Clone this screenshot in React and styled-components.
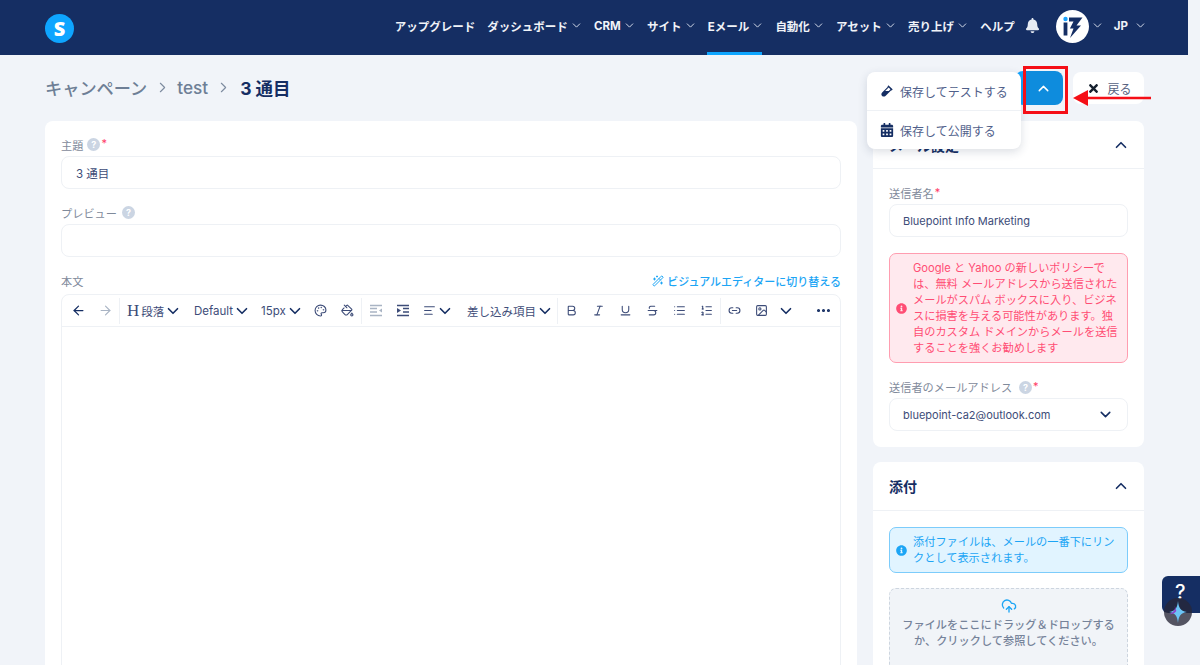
import React from 'react';
import styled, { createGlobalStyle } from 'styled-components';
import {
  ArrowLeft, ArrowRight, ChevronDown, ChevronUp, Palette, Bold, Italic, Underline, Strikethrough,
  List, ListOrdered, Link2, Image as ImageIcon, MoreHorizontal, WandSparkles, CloudUpload, AlignLeft,
  ChevronRight, PaintBucket,
} from 'lucide-react';
import { FaBell, FaCalendarAlt, FaVial, FaTimes, FaInfoCircle } from 'react-icons/fa';

const CJK = `Inter, "Noto Sans CJK JP", sans-serif`;
const NAVY = '#152e63';
const TEXT = '#3d4c78';

const Global = createGlobalStyle`
  html, body { margin: 0; height: 665px; overflow: hidden; background: #f1f4f9; }
  body { font-family: ${CJK}; }
  * { box-sizing: border-box; }
`;

const Shell = styled.div`width: 1188px; height: 665px; overflow: hidden;`;

const Header = styled.header`
  height: 55px; background: ${NAVY}; display: flex; align-items: center; justify-content: space-between;
  padding: 0 42px 0 45px;
`;
const Logo = styled.div`
  width: 29px; height: 29px; border-radius: 50%; background: #0ea5ff; color: #fff; font: 800 20px/29px "Open Sans", sans-serif;
  text-align: center; margin-top: 1px;
`;
const Nav = styled.nav`display: flex; align-items: center; height: 55px;`;
const NavItem = styled.div`
  position: relative; display: flex; align-items: center; height: 55px;
  padding: 0 ${p => p.$pr ?? 6.1}px 4px ${p => p.$pl ?? 6.1}px;
  color: #f0f3f8; font-size: 11.5px; font-weight: 700; white-space: nowrap; gap: ${p => p.$gap ?? 3}px;
  svg { color: #d5dcea; margin: 0 -1px; }
  ${p => p.$active && `&::after { content: ''; position: absolute; left: 5px; right: 7px; bottom: 0; height: 3px; background: #0ea5ff; }`}
`;
const BellWrap = styled.div`display: flex; padding: 0 12px 4px 4px; color: #e6ebf3; font-size: 15px;`;
const Avatar = styled.div`width: 33px; height: 33px; margin-left: 4px; margin-right: -1px; margin-bottom: 3px;`;

const Main = styled.main`padding: 0 44px 0 45px;`;
const TitleRow = styled.div`height: 66px; display: flex; align-items: center; justify-content: space-between;`;
const Crumbs = styled.div`display: flex; align-items: center; color: #6e7f96; font-size: 17.2px; font-weight: 500; padding-bottom: 2px;`;
const CrumbSep = styled.span`display: flex; margin: 0 6px 0 7px; color: #7d8ba0;`;
const CrumbNow = styled.span`color: ${NAVY}; font-size: 17.5px; font-weight: 700; margin-left: 2px;`;

const Actions = styled.div`position: relative; display: flex; align-items: center; gap: 10px;`;
const Split = styled.div`display: flex; height: 34px;`;
const SaveMain = styled.div`width: 8px; background: #12a4ff; border-radius: 8px 0 0 8px;`;
const SaveCaret = styled.div`
  width: 40px; background: #0e8cdd; border-radius: 0 8px 8px 0; color: #fff; display: flex; align-items: center; justify-content: center;
  border-left: 1px solid #2a9be2;
`;
const BackBtn = styled.div`
  width: 71px; height: 32px; background: #fff; border-radius: 8px; display: flex; align-items: center; justify-content: center;
  gap: 7px; font-size: 12px; color: #55617e; padding-left: 2px; svg { color: #15202e; }
`;
const Menu = styled.div`
  position: absolute; left: -148px; top: 1px; width: 154px; height: 77px; background: #fff; border-radius: 8px;
  box-shadow: 0 3px 10px rgba(40, 55, 90, .16); z-index: 3;
`;
const MenuRow = styled.div`
  height: ${p => p.$h}px; display: flex; align-items: center; gap: 6px; padding-left: 13px; color: #50608a; font-size: 12px;
  & + & { border-top: 1px solid #eef1f5; }
  svg { color: ${NAVY}; flex: none; width: 14px; }
`;
const RedBox = styled.div`
  position: absolute; left: 8px; top: -5px; width: 45px; height: 48px; border: 3px solid #f50f17; z-index: 4;
`;
const RedArrow = styled.svg`position: absolute; left: 58px; top: 17px; z-index: 4;`;

const Columns = styled.div`display: grid; grid-template-columns: 812px 271px; gap: 16px; align-items: start;`;
const Card = styled.section`background: #fff; border-radius: 8px; margin-bottom: ${p => p.$mb || 0}px;`;
const FormCard = styled(Card)`padding: 12px 16px 0; height: 700px;`;
const Label = styled.div`
  display: flex; align-items: center; height: ${p => p.$h || 23}px; color: #7f8a9b; font-size: 11.2px; gap: 4px;
  justify-content: ${p => p.$between ? 'space-between' : 'flex-start'};
`;
const Help = styled.span`
  width: 13px; height: 13px; border-radius: 50%; background: #cbd5e3; color: #fff; font-size: 9px; font-weight: 700;
  display: inline-flex; align-items: center; justify-content: center; margin-left: ${p => p.$ml || 0}px;
`;
const Req = styled.span`color: #ff3b66; font-size: 11px; margin-left: -3px; margin-top: -3px;`;
const Input = styled.div`
  height: 33px; border: 1px solid #eef1f5; border-radius: 8px; padding: 0 ${p => p.$pad || 13}px; display: flex; align-items: center;
  justify-content: space-between; color: ${TEXT}; font-size: ${p => p.$fs || 11}px; margin-bottom: ${p => p.$mb ?? 12}px;
  svg { color: ${NAVY}; }
`;
const SwitchLink = styled.span`display: flex; align-items: center; gap: 3px; color: #1ca5f5; font-size: 11px; font-weight: 500;`;
const Editor = styled.div`margin-top: 2px; border: 1px solid #eef1f5; border-radius: 8px 8px 0 0; height: 500px;`;
const Toolbar = styled.div`
  height: 32px; display: flex; align-items: center; padding-left: 3px; border-bottom: 1px solid #eef1f5; color: ${TEXT}; position: relative;
`;
const Tool = styled.span`
  width: ${p => p.$w || 27}px; display: flex; align-items: center; justify-content: center; color: ${p => p.$dim ? '#a9b4c4' : TEXT};
  flex: none;
  svg { flex: none; }
`;
const ToolText = styled.span`
  display: flex; align-items: center; padding: 0 5px 0 7px; font-size: 11.5px; color: ${TEXT}; white-space: nowrap; flex: none;
  width: ${p => p.$w}px; justify-content: space-between;
  svg { flex: none; }
`;
const Heading = styled.b`font: 500 17px "Liberation Serif", serif; color: ${TEXT}; margin-right: 2px;`;
const ToolSep = styled.span`width: 1px; height: 26px; background: #eef1f5; flex: none;`;
const MoreTool = styled(Tool)`margin-left: auto; margin-right: 3px; color: ${NAVY};`;

const Side = styled.div`display: flex; flex-direction: column;`;
const CardHead = styled.div`
  height: ${p => p.$h}px; display: flex; align-items: center; justify-content: space-between; padding: 0 14px 0 16px;
  border-bottom: 1px solid #eef1f5; color: ${NAVY}; font-size: 14px; font-weight: 700;
`;
const CardBody = styled.div`padding: ${p => p.$pt}px 16px ${p => p.$pb}px;`;
const Alert = styled.div`
  display: flex; align-items: center; gap: 6px; border: 1px solid ${p => p.$border}; border-radius: 7px; background: ${p => p.$bg};
  color: ${p => p.$color}; font-size: 11.2px; line-height: 16px; padding: ${p => p.$py}px 0 ${p => p.$py}px 6px; margin-bottom: ${p => p.$mb}px;
  white-space: nowrap; svg { flex: none; }
`;
const Drop = styled.div`
  height: 140px; border: 1px dashed #cdd5df; border-radius: 7px; background: #f1f4f8; color: #76839a; font-size: 11.2px; line-height: 16px;
  text-align: center; padding-top: 9px; font-weight: 500;
  svg { display: block; margin: 0 auto 3px; color: #1ca5f5; }
`;

const HelpDock = styled.div`
  position: fixed; right: 0; top: 576px; width: 38px; height: 37px; background: ${NAVY}; border-radius: 6px 0 0 6px; color: #fff;
  font-size: 20px; font-weight: 500; padding-left: 13px; line-height: 33px;
`;
const Spark = styled.div`
  position: fixed; left: 1164px; top: 598px; width: 28px; height: 28px; border-radius: 50%; background: rgba(40, 38, 55, .78);
  display: flex; align-items: center; justify-content: center;
`;

const Chev = () => <ChevronDown size={13} strokeWidth={1.8} />;
const TChev = () => <ChevronDown size={18} strokeWidth={2.2} color={NAVY} />;
const I = { size: 13, strokeWidth: 2 };

const OutdentGlyph = () => (
  <svg width="14" height="13" viewBox="0 0 14 13" fill="none" stroke="currentColor" strokeWidth="1.4">
    <path d="M1 1.5h12M1 4.5h7M1 8h7M1 11.5h12" />
    <path d="M13 4.5L10 6.5l3 2z" fill="currentColor" stroke="none" />
  </svg>
);
const IndentGlyph = () => (
  <svg width="14" height="13" viewBox="0 0 14 13" fill="none" stroke="currentColor" strokeWidth="1.4">
    <path d="M1 1.5h12M7 4.5h6M7 8h6M1 11.5h12" />
    <path d="M1 4l4 2.5L1 9z" fill="currentColor" stroke="none" />
  </svg>
);

export default function App() {
  return (
    <Shell>
      <Global />
      <Header>
        <Logo>S</Logo>
        <Nav>
          <NavItem>アップグレード</NavItem>
          <NavItem>ダッシュボード<Chev /></NavItem>
          <NavItem>CRM<Chev /></NavItem>
          <NavItem>サイト<Chev /></NavItem>
          <NavItem $active>Eメール<Chev /></NavItem>
          <NavItem>自動化<Chev /></NavItem>
          <NavItem>アセット<Chev /></NavItem>
          <NavItem>売り上げ<Chev /></NavItem>
          <NavItem>ヘルプ</NavItem>
          <BellWrap><FaBell /></BellWrap>
          <Avatar>
            <svg width="33" height="33" viewBox="0 0 33 33">
              <circle cx="16.5" cy="16.5" r="16.5" fill="#fff" />
              <circle cx="9.5" cy="9" r="2.2" fill="#1aa3ff" />
              <rect x="7.6" y="12.5" width="3.8" height="13" fill={NAVY} />
              <path d="M13 7.5h13.5l-6 8h4.5L14 28l3.5-9.5h-3.6l3.6-7H13z" fill={NAVY} />
            </svg>
          </Avatar>
          <NavItem $pl={4} $pr={4}><Chev /></NavItem>
          <NavItem $pl={7} $pr={0} $gap={7}>JP<Chev /></NavItem>
        </Nav>
      </Header>
      <Main>
        <TitleRow>
          <Crumbs>
            キャンペーン
            <CrumbSep><ChevronRight size={17} strokeWidth={1.6} /></CrumbSep>
            test
            <CrumbSep><ChevronRight size={17} strokeWidth={1.6} /></CrumbSep>
            <CrumbNow>3 通目</CrumbNow>
          </Crumbs>
          <Actions>
            <Split>
              <SaveMain />
              <SaveCaret><ChevronUp size={17} strokeWidth={2} /></SaveCaret>
            </Split>
            <BackBtn><FaTimes size={13} />戻る</BackBtn>
            <Menu>
              <MenuRow $h={38}><FaVial size={12} />保存してテストする</MenuRow>
              <MenuRow $h={39}><FaCalendarAlt size={14} />保存して公開する</MenuRow>
            </Menu>
            <RedBox />
            <RedArrow width="80" height="20" viewBox="0 0 80 20">
              <path d="M14 10H78" stroke="#f50f17" strokeWidth="2.4" />
              <path d="M0 10L15 2V18Z" fill="#f50f17" />
            </RedArrow>
          </Actions>
        </TitleRow>
        <Columns>
          <FormCard>
            <Label>主題 <Help>?</Help><Req>*</Req></Label>
            <Input $fs={11.5} $pad={14}>3 通目</Input>
            <Label>プレビュー <Help $ml={1}>?</Help></Label>
            <Input />
            <Label $between>本文
              <SwitchLink><WandSparkles size={12} />ビジュアルエディターに切り替える</SwitchLink>
            </Label>
            <Editor>
              <Toolbar>
                <Tool><ArrowLeft size={15} strokeWidth={2} color={NAVY} /></Tool>
                <Tool $dim><ArrowRight size={15} strokeWidth={1.8} /></Tool>
                <ToolSep />
                <ToolText $w={67}><span><Heading>H</Heading>段落</span><TChev /></ToolText>
                <ToolText $w={67}>Default<TChev /></ToolText>
                <ToolText $w={53}>15px<TChev /></ToolText>
                <Tool><Palette {...I} /></Tool>
                <Tool><PaintBucket {...I} /></Tool>
                <ToolSep />
                <Tool $dim><OutdentGlyph /></Tool>
                <Tool><IndentGlyph /></Tool>
                <Tool $w={44}><AlignLeft {...I} /><TChev /></Tool>
                <ToolText $w={97}>差し込み項目<TChev /></ToolText>
                <ToolSep />
                <Tool><Bold {...I} /></Tool>
                <Tool><Italic {...I} /></Tool>
                <Tool><Underline {...I} /></Tool>
                <Tool><Strikethrough {...I} /></Tool>
                <Tool><List {...I} /></Tool>
                <Tool><ListOrdered {...I} /></Tool>
                <ToolSep />
                <Tool><Link2 {...I} /></Tool>
                <Tool><ImageIcon {...I} /></Tool>
                <Tool $w={22}><TChev /></Tool>
                <MoreTool><MoreHorizontal size={17} strokeWidth={2.4} /></MoreTool>
              </Toolbar>
            </Editor>
          </FormCard>
          <Side>
            <Card $mb={15}>
              <CardHead $h={48}>メール設定<ChevronUp size={18} strokeWidth={2.2} /></CardHead>
              <CardBody $pt={13} $pb={16}>
                <Label $h={22}>送信者名<Req>*</Req></Label>
                <Input $mb={16}>Bluepoint Info Marketing</Input>
                <Alert $bg="#ffe9ee" $border="#ff9db0" $color="#ff4d74" $py={6} $mb={13}>
                  <FaInfoCircle size={11} />
                  <span>
                    Google と Yahoo の新しいポリシーで<br />
                    は、無料 メールアドレスから送信された<br />
                    メールがスパム ボックスに入り、ビジネ<br />
                    スに損害を与える可能性があります。独<br />
                    自のカスタム ドメインからメールを送信<br />
                    することを強くお勧めします
                  </span>
                </Alert>
                <Label $h={22}>送信者のメールアドレス <Help $ml={3}>?</Help><Req>*</Req></Label>
                <Input $mb={0}>bluepoint-ca2@outlook.com<ChevronDown size={17} strokeWidth={2.2} /></Input>
              </CardBody>
            </Card>
            <Card>
              <CardHead $h={49}>添付<ChevronUp size={18} strokeWidth={2.2} /></CardHead>
              <CardBody $pt={16} $pb={0}>
                <Alert $bg="#e1f4ff" $border="#7cccfb" $color="#1ca5f5" $py={6} $mb={15}>
                  <FaInfoCircle size={11} />
                  <span>添付ファイルは、メールの一番下にリン<br />クとして表示されます。</span>
                </Alert>
                <Drop>
                  <CloudUpload size={16} strokeWidth={2} />
                  ファイルをここにドラッグ＆ドロップする<br />か、クリックして参照してください。
                </Drop>
              </CardBody>
            </Card>
          </Side>
        </Columns>
      </Main>
      <HelpDock>?</HelpDock>
      <Spark>
        <svg width="22" height="22" viewBox="0 0 20 20">
          <path d="M10 0C10.6 6 12 9 18 10C12 11 10.6 14 10 20C9.4 14 8 11 2 10C8 9 9.4 6 10 0Z" fill="#6cc4f5" />
          <path d="M7 4C8 8 6 10 2 12C5 12 7 11 8.5 9Z" fill="#8e44c9" />
        </svg>
      </Spark>
    </Shell>
  );
}
